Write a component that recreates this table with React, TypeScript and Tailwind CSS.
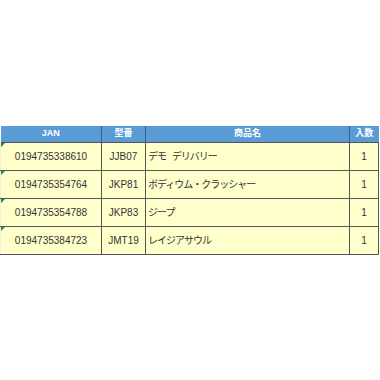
const rows = [
  { jan: "0194735338610", code: "JJB07", name: "デモ デリバリー", qty: "1" },
  { jan: "0194735354764", code: "JKP81", name: "ボディウム・クラッシャー", qty: "1" },
  { jan: "0194735354788", code: "JKP83", name: "ジープ", qty: "1" },
  { jan: "0194735384723", code: "JMT19", name: "レイジアサウル", qty: "1" },
];

export default function App() {
  return (
    <div
      className="w-[380px] h-[380px] bg-white pt-[126px]"
      style={{ fontFamily: '"Liberation Sans", "Noto Sans CJK JP", sans-serif' }}
    >
      <table className="border-collapse table-fixed w-[378px] text-[10px] text-[#333]">
        <colgroup>
          <col className="w-[101px]" />
          <col className="w-[44px]" />
          <col className="w-[204px]" />
          <col className="w-[29px]" />
        </colgroup>
        <thead>
          <tr className="h-[16px] bg-[#5b9bd5] text-white text-[9px] font-bold">
            <th className="border-r border-[#3f5f80] p-0 text-center">JAN</th>
            <th className="border-r border-[#3f5f80] p-0 text-center">型番</th>
            <th className="border-r border-[#3f5f80] p-0 text-center">商品名</th>
            <th className="p-0 text-center">入数</th>
          </tr>
        </thead>
        <tbody>
          {rows.map((r) => (
            <tr key={r.jan} className="h-[28px] bg-[#ffffcc]">
              <td className="relative border border-l-[#f0f0d8] border-[#555] p-0 text-center">
                <span className="absolute left-0 top-0 w-0 h-0 border-t-[4px] border-r-[4px] border-t-[#1f8a3a] border-r-transparent" />
                {r.jan}
              </td>
              <td className="border border-[#555] p-0 text-center">{r.code}</td>
              <td className="border border-[#555] p-0 pl-[2px] text-left tracking-[-1px] [word-spacing:4px]">
                {r.name}
              </td>
              <td className="border border-[#555] p-0 text-center">{r.qty}</td>
            </tr>
          ))}
        </tbody>
      </table>
    </div>
  );
}
